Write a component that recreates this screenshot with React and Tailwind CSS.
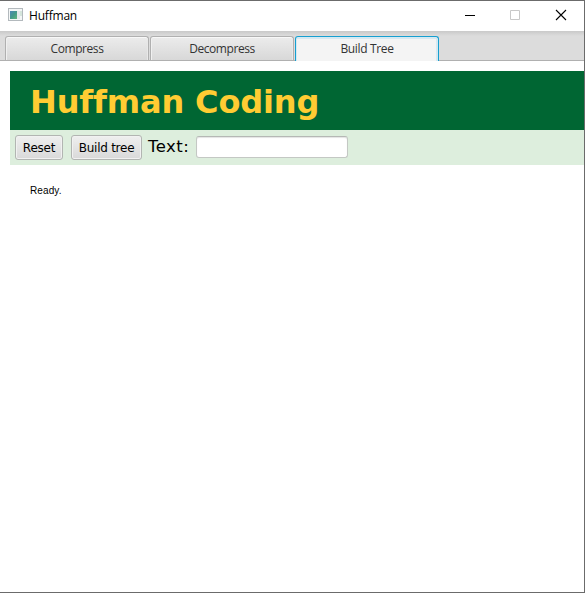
function TitleBar() {
  return (
    <header className="flex h-[30px] shrink-0 items-center bg-white pl-2">
      <svg className="mb-[3px]" width="15" height="13" viewBox="0 0 15 13" shapeRendering="crispEdges">
        <defs>
          <linearGradient id="pane" x1="0" y1="0" x2="1" y2="1">
            <stop offset="0" stopColor="#4f86b8" />
            <stop offset="0.5" stopColor="#43988a" />
            <stop offset="1" stopColor="#62b47c" />
          </linearGradient>
        </defs>
        <path d="M0 0h15v13H0z" fill="#b3b9bd" />
        <path d="M1 1h13v11H1z" fill="#f4f6f6" />
        <path d="M2 3h7v8H2z" fill="url(#pane)" />
        <path d="M9 3h3v8H9z" fill="#e4e8ea" />
        <path d="M12 3h2v5h-2z" fill="#d5e5db" />
      </svg>
      <span className="ml-[6px] text-[12px] leading-[16px] tracking-[-0.2px] text-black [font-variant-ligatures:none]">
        Huffman
      </span>
      <div className="ml-auto flex h-full items-center">
        <svg width="120" height="30" viewBox="0 0 120 30" fill="none">
          <path d="M1 14.5h10" stroke="#000" />
          <path d="M46.500 9.500h9v9h-9z" stroke="#c8c8c8" />
          <path d="M92 9l10 10M102 9L92 19" stroke="#000" strokeWidth="1.1" />
        </svg>
      </div>
    </header>
  );
}

function Tab({ label, active }) {
  return (
    <button
      className={
        active
          ? "h-[25px] w-[144px] rounded-t-[3px] border border-b-0 border-[#169fd0] bg-[#f4f4f4] pb-px text-[12px] leading-[22px] tracking-[-0.35px] text-[#333] shadow-[inset_0_2px_0_#d5e9f2,inset_-2px_0_0_#d5e9f2,inset_1px_0_0_#d5e9f2]"
          : "h-[24px] w-[144px] rounded-t-[3px] border border-b-0 border-[#b0b0b0] bg-linear-to-b from-[#ececec] to-[#d8d8d8] pt-px text-[12px] leading-[22px] tracking-[-0.42px] text-[#333] shadow-[inset_0_1px_0_#f8f8f8,inset_1px_0_0_#f0f0f0,inset_-1px_0_0_#e8e8e8]"
      }
    >
      {label}
    </button>
  );
}

function ToolButton({ children, className }) {
  return (
    <button
      className={
        "h-[25px] rounded-[3px] border border-[#b2b5b2] bg-linear-to-b from-[#efefef] to-[#d9d9d9] pt-px font-['DejaVu_Sans',sans-serif] text-[12px] leading-[22px] text-black shadow-[inset_0_0_0_1px_#f1f1f1] " +
        className
      }
    >
      {children}
    </button>
  );
}

export default function App() {
  return (
    <div className="h-[594px] w-[585px] overflow-hidden bg-white font-['Open_Sans',sans-serif]">
      <div className="flex h-[593px] flex-col border-t border-r border-b border-[#6b6b6b] bg-white">
        <TitleBar />
        <nav className="flex h-[30px] shrink-0 items-start gap-px bg-[linear-gradient(#c9c9c9,#dcdcdc_5px,#dcdcdc)] pt-[5px] pl-[5px] shadow-[inset_0_-1px_0_#b0b0b0]">
          <Tab label="Compress" />
          <Tab label="Decompress" />
          <Tab label="Build Tree" active />
        </nav>
        <main className="flex flex-1 flex-col pt-[10px] pl-[10px]">
          <div className="h-[59px] bg-[#006633] pl-5">
            <h1 className="font-['DejaVu_Sans',sans-serif] text-[32px] leading-[62px] font-bold tracking-[-0.15px] whitespace-nowrap text-[#ffcc33] [font-variant-ligatures:none]">
              Huffman Coding
            </h1>
          </div>
          <div className="flex h-[35px] items-start bg-[#ddeedd] pt-[5px] pl-[5px]">
            <ToolButton className="w-[48px] tracking-[-0.25px]">Reset</ToolButton>
            <ToolButton className="ml-2 w-[71px] tracking-[-0.25px]">Build tree</ToolButton>
            <label className="ml-[6px] w-[48px] font-['DejaVu_Sans',sans-serif] text-[16.5px] leading-[24px] tracking-[0.45px] whitespace-nowrap text-black">
              Text:
            </label>
            <input className="mt-px h-[22px] w-[152px] rounded-[3px] border border-[#c4c8c4] border-t-[#b5b8b5] bg-white shadow-[inset_0_1px_1px_#e4e4e4] outline-none" />
          </div>
          <p className="mt-[18px] pl-5 font-['Liberation_Sans',sans-serif] text-[10px] leading-[15px] tracking-[0.1px] text-black">
            Ready.
          </p>
        </main>
      </div>
    </div>
  );
}
